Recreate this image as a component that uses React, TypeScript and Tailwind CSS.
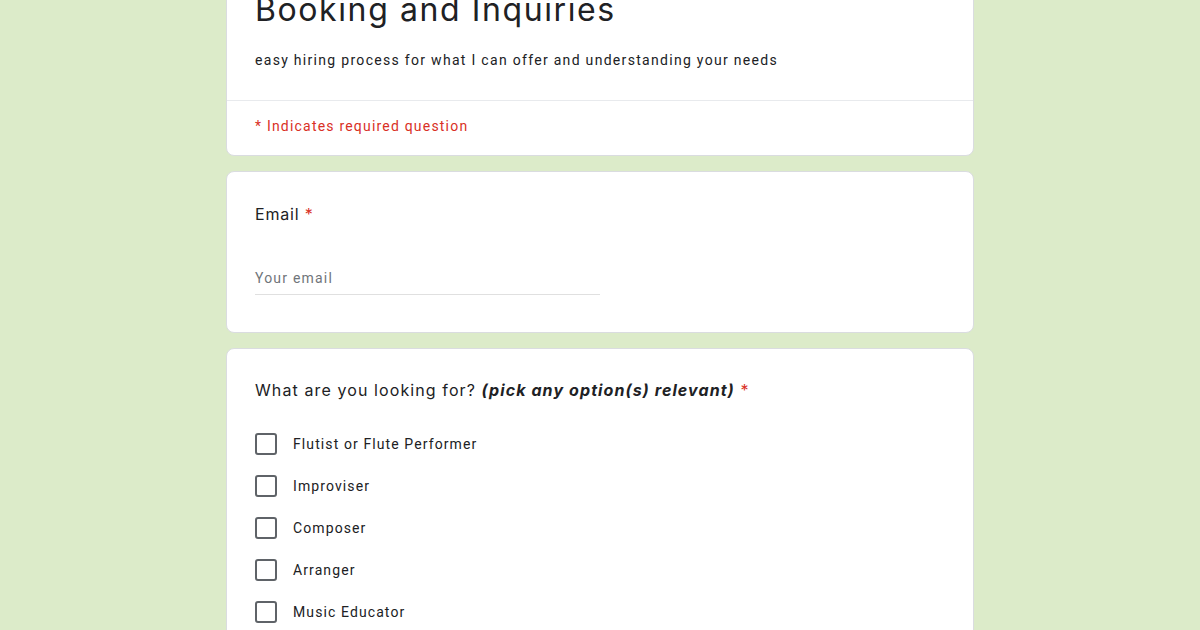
import React from 'react';

const options = ['Flutist or Flute Performer', 'Improviser', 'Composer', 'Arranger', 'Music Educator', 'Other'];

const Card: React.FC<{ className?: string; children: React.ReactNode }> = ({ className = '', children }) => (
  <div className={`bg-white border border-[#dadce0] rounded-lg ${className}`}>{children}</div>
);

export default function App() {
  return (
    <div className="w-[1200px] h-[630px] overflow-hidden bg-[#dcebc9] font-['Roboto',sans-serif] text-[#202124]">
      <div className="w-[748px] mx-auto -mt-[30px] flex flex-col gap-[15px]">
        {/* header */}
        <Card>
          <div className="px-[28px] pt-[19px] pb-[30px] border-b border-[#e8eaed]">
            <h1 className="text-[32px] leading-[40px] font-['Inter',sans-serif] font-normal tracking-[1.6px] text-[#202124]">
              Booking and Inquiries
            </h1>
            <p className="mt-5 text-[14px] leading-[20px] tracking-[1.3px]">
              easy hiring process for what I can offer and understanding your needs
            </p>
          </div>
          <div className="px-[28px] pt-[15px] pb-[19px] text-[14px] leading-[20px] text-[#d93025] tracking-[1.2px]">
            * Indicates required question
          </div>
        </Card>

        {/* email */}
        <Card className="px-[28px] pt-[30px] pb-[37px]">
          <div className="text-[16px] leading-[24px] font-['Inter',sans-serif] tracking-[0.8px]">
            Email <span className="text-[#d93025]">*</span>
          </div>
          <div className="mt-[40px] w-[345px] border-b border-[#e0e0e0] pb-[4px]">
            <span className="text-[14px] leading-[20px] text-[#70757a] tracking-[1.2px]">Your email</span>
          </div>
        </Card>

        {/* options */}
        <Card className="px-[28px] pt-[29px] pb-6">
          <div className="text-[16px] leading-[24px] font-['Inter',sans-serif] tracking-[1.1px]">
            What are you looking for? <span className="italic font-bold">(pick any option(s) relevant)</span>{' '}
            <span className="text-[#d93025]">*</span>
          </div>
          <div className="mt-[31px] flex flex-col gap-[20px]">
            {options.map((o) => (
              <label key={o} className="flex items-center gap-[16px] h-[22px]">
                <span className="w-[22px] h-[22px] border-2 border-[#5f6368] rounded-[3px] shrink-0" />
                <span className="text-[14px] leading-[20px] tracking-[1.1px]">{o}</span>
              </label>
            ))}
          </div>
        </Card>
      </div>
    </div>
  );
}
